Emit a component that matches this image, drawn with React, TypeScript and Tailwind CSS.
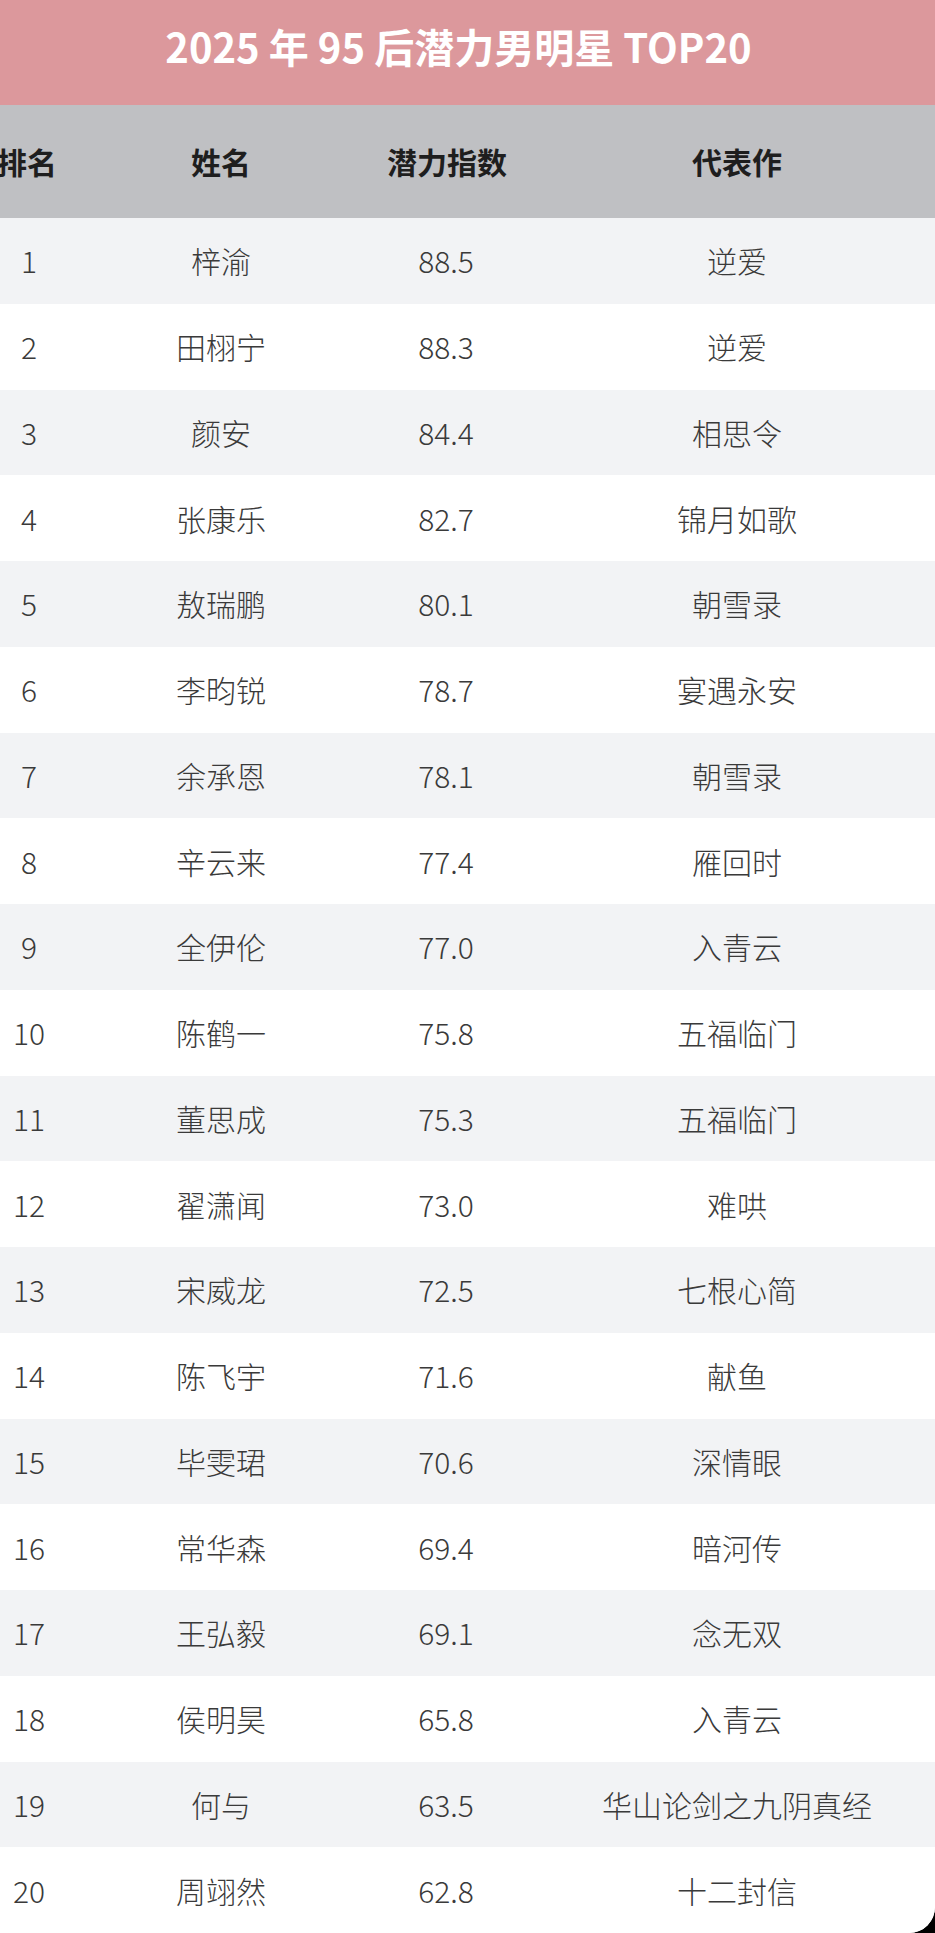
import React from 'react';

interface Star {
  rank: number;
  name: string;
  score: string;
  work: string;
}

const stars: Star[] = [
  { rank: 1, name: '梓渝', score: '88.5', work: '逆爱' },
  { rank: 2, name: '田栩宁', score: '88.3', work: '逆爱' },
  { rank: 3, name: '颜安', score: '84.4', work: '相思令' },
  { rank: 4, name: '张康乐', score: '82.7', work: '锦月如歌' },
  { rank: 5, name: '敖瑞鹏', score: '80.1', work: '朝雪录' },
  { rank: 6, name: '李昀锐', score: '78.7', work: '宴遇永安' },
  { rank: 7, name: '余承恩', score: '78.1', work: '朝雪录' },
  { rank: 8, name: '辛云来', score: '77.4', work: '雁回时' },
  { rank: 9, name: '全伊伦', score: '77.0', work: '入青云' },
  { rank: 10, name: '陈鹤一', score: '75.8', work: '五福临门' },
  { rank: 11, name: '董思成', score: '75.3', work: '五福临门' },
  { rank: 12, name: '翟潇闻', score: '73.0', work: '难哄' },
  { rank: 13, name: '宋威龙', score: '72.5', work: '七根心简' },
  { rank: 14, name: '陈飞宇', score: '71.6', work: '献鱼' },
  { rank: 15, name: '毕雯珺', score: '70.6', work: '深情眼' },
  { rank: 16, name: '常华森', score: '69.4', work: '暗河传' },
  { rank: 17, name: '王弘毅', score: '69.1', work: '念无双' },
  { rank: 18, name: '侯明昊', score: '65.8', work: '入青云' },
  { rank: 19, name: '何与', score: '63.5', work: '华山论剑之九阴真经' },
  { rank: 20, name: '周翊然', score: '62.8', work: '十二封信' },
];

// columns are wider than the viewport on purpose: the table is scrolled a little, first column clipped
const cols = 'grid grid-cols-[56px_332px_118px_464px] ml-[-1px] whitespace-nowrap';

export default function App() {
  return (
    <div
      className="w-[935px] bg-black"
      style={{ fontFamily: '"Noto Sans CJK SC", "Noto Sans", sans-serif' }}
    >
      <div className="w-full overflow-hidden rounded-br-[26px] bg-white">
        <div className="flex h-[105px] items-center justify-center bg-[#dc989c] pb-[14px] pr-[18px]">
          <h1 className="text-[40px] font-bold text-white">2025 年 95 后潜力男明星 TOP20</h1>
        </div>

        <div className={`${cols} h-[113px] items-center bg-[#bfc0c3] text-[30px] font-bold text-[#1e1e1e]`}>
          <div className="flex justify-center">排名</div>
          <div className="text-center">姓名</div>
          <div className="text-center">潜力指数</div>
          <div className="text-center">代表作</div>
        </div>

        {stars.map((s, i) => (
          <div
            key={s.rank}
            className={`${cols} h-[85.75px] items-center text-[30px] font-light text-[#3a3a3a] ${
              i % 2 === 0 ? 'bg-[#f2f3f5]' : 'bg-white'
            }`}
          >
            <div className="pl-[4px] text-center">{s.rank}</div>
            <div className="text-center">{s.name}</div>
            <div className="text-center">{s.score}</div>
            <div className="text-center">{s.work}</div>
          </div>
        ))}
      </div>
    </div>
  );
}
